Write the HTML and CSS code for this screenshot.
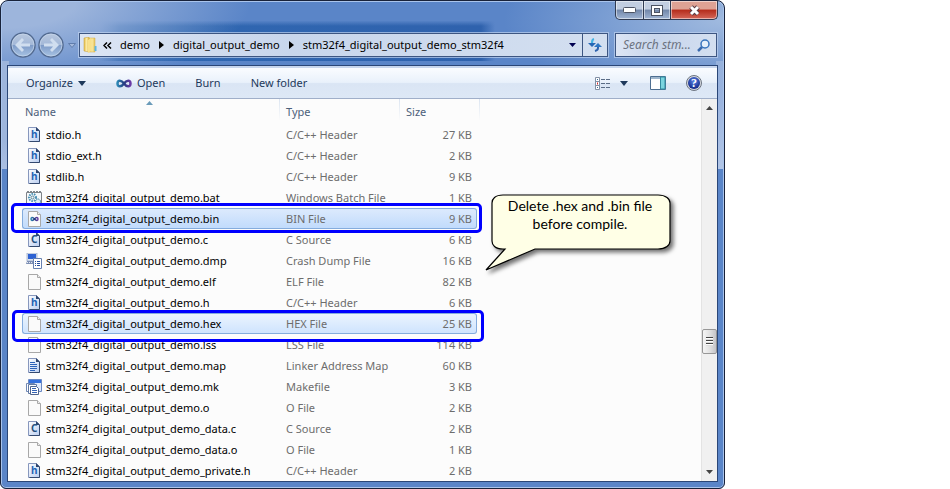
FILE: index.html
```html
<!DOCTYPE html>
<html lang="en">
<head>
<meta charset="utf-8">
<title>stm32f4_digital_output_demo_stm32f4</title>
<link rel="stylesheet" href="styles.css">
</head>
<body>
<svg class="defs" aria-hidden="true">
  <defs>
    <linearGradient id="blue" x1="0" y1="0" x2="1" y2="1"><stop offset="0" stop-color="#ffffff"/><stop offset="1" stop-color="#b9cdf0"/></linearGradient>
    <linearGradient id="glass" x1="0" y1="0" x2="0" y2="1"><stop offset="0" stop-color="#b9c8df"/><stop offset="0.48" stop-color="#a4b9d8"/><stop offset="0.52" stop-color="#7f9cc8"/><stop offset="1" stop-color="#a9c4e4"/></linearGradient>
    <linearGradient id="folder" x1="0" y1="0" x2="1" y2="0"><stop offset="0" stop-color="#e4bd4c"/><stop offset="0.5" stop-color="#fbe9a0"/><stop offset="1" stop-color="#e6c25a"/></linearGradient>
    <linearGradient id="loop" x1="0" y1="0" x2="1" y2="0"><stop offset="0" stop-color="#2c86b4"/><stop offset="0.5" stop-color="#243c80"/><stop offset="1" stop-color="#6a3aa6"/></linearGradient>
    <radialGradient id="orb" cx="0.5" cy="0.35" r="0.6"><stop offset="0" stop-color="#5c86e8"/><stop offset="1" stop-color="#152c8c"/></radialGradient>
  </defs>
  <symbol id="page" viewBox="0 0 16 16"><path d="M2.500.5h9l3 3v12h-12z" fill="#fafafa" stroke="#a8a8a8"/><path d="M11.500.5v3h3" fill="#eee" stroke="#a8a8a8"/></symbol>
  <symbol id="bluepage" viewBox="0 0 16 16"><path d="M2.500.5h8l3 3v11h-11z" fill="url(#blue)" stroke="#8797bd"/><path d="M13.500 4v10.500h-10" fill="none" stroke="#33496f"/><path d="M10 0l4 4h-4z" fill="#2f466e"/></symbol>
  <symbol id="map" viewBox="0 0 16 16"><use href="#bluepage"/><path d="M4 4.500h5M4 6.500h7M4 8.500h7M4 10.500h7M4 12.500h5" stroke="#2c62b8"/></symbol>
  <symbol id="bin" viewBox="0 0 16 16"><use href="#page"/><path d="M8.500 8C6.500 5.800 5 6.500 5 8s1.500 2.200 3.500 0 3.500-1.500 3.500 0-1.500 2.200-3.500 0z" fill="none" stroke="url(#loop)" stroke-width="1.500"/></symbol>
  <symbol id="batch" viewBox="0 0 16 16"><path d="M.5 2.500h15v11.500h-15z" fill="#f5f8fa" stroke="#7e8388"/><path d="M1 1.500h14" stroke="#80868c" stroke-dasharray="2 1"/><circle cx="6.500" cy="7.500" r="3.500" fill="none" stroke="#4a91b5" stroke-width="2" stroke-dasharray="1.500 1"/><circle cx="6.500" cy="7.500" r="1.500" fill="none" stroke="#5b8498"/><circle cx="12" cy="11.500" r="2.500" fill="#dcecf5" stroke="#4686a5" stroke-dasharray="2 .7"/></symbol>
  <symbol id="dump" viewBox="0 0 16 16"><path d="M1 0h10v8H1z" fill="#dce3ef" stroke="#8fa0c4" stroke-width=".7"/><path d="M2 1h8v5H2z" fill="#2e62d2"/><path d="M0 11l1-3h9v3z" fill="#7e90b5"/><path d="M1 9.500h8" stroke="#e4e9f2" stroke-dasharray="1 1"/><path d="M7.500 5.500h8v10h-8z" fill="#fff" stroke="#6882b1"/><path d="M9 8.500h1m1 0h3M9 10.500h1m1 0h3M9 12.500h1m1 0h3" stroke="#284f9f"/></symbol>
  <symbol id="make" viewBox="0 0 16 16"><path d="M2.500.5h13v12h-13z" fill="#dfe9fb" stroke="#6a89c4"/><path d="M3 1h12v3H3z" fill="#3470dd"/><path d="M.5 4.500h8v8h-8z" fill="#fff" stroke="#7189b5"/><path d="M2.500 5.500h8v9h-8z" fill="#fff" stroke="#6078a2"/><path d="M4.500 7.500h6l2 2v6h-8z" fill="#fff" stroke="#50658d"/><path d="M6 9.500h4M6 11.500h5M6 13.500h5" stroke="#3563b5"/></symbol>
  <symbol id="down" viewBox="0 0 8 5"><path d="M0 0h8L4 5z" fill="currentColor"/></symbol>
  <symbol id="right" viewBox="0 0 5 8"><path d="M0 0l5 4-5 4z" fill="currentColor"/></symbol>
</svg>

<main class="window">
  <div class="caption">
    <button class="cap" aria-label="Minimize"><svg width="13" height="6"><rect x=".5" y=".5" width="12" height="5" rx="1" fill="#fff" stroke="#4c5363"/></svg></button>
    <button class="cap" aria-label="Maximize"><svg width="12" height="11"><rect x="2" y="2" width="8" height="7" fill="none" stroke="#4c5363" stroke-width="4"/><rect x="2" y="2" width="8" height="7" fill="none" stroke="#fff" stroke-width="2"/></svg></button>
    <button class="cap close" aria-label="Close"><svg width="13" height="11"><path d="M3 2l7 7M10 2L3 9" stroke="#593c43" stroke-width="5"/><path d="M3 2l7 7M10 2L3 9" stroke="#fff" stroke-width="3"/></svg></button>
  </div>

  <nav class="navbar">
    <div class="travel">
      <button aria-label="Back"><svg width="26" height="26"><circle cx="13" cy="13" r="12" fill="url(#glass)" stroke="#536b91" stroke-width="1.500"/><circle cx="13" cy="13" r="11" fill="none" stroke="#c9d8ed" opacity=".7"/><path d="M5 13l7-7 2 2-3 3.500h9v3h-9l3 3.500-2 2z" fill="#d0deef"/></svg></button>
      <button aria-label="Forward"><svg width="26" height="26"><circle cx="13" cy="13" r="12" fill="url(#glass)" stroke="#536b91" stroke-width="1.500"/><circle cx="13" cy="13" r="11" fill="none" stroke="#c9d8ed" opacity=".7"/><path d="M21 13l-7-7-2 2 3 3.500H6v3h9l-3 3.500 2 2z" fill="#d0deef"/></svg></button>
      <button class="recent" aria-label="Recent pages"><svg width="8" height="5" viewBox="0 0 8 5"><path d="M.5.5h7L4 4.500z" fill="#a3b9dc" stroke="#607dac"/></svg></button>
    </div>
    <div class="address">
      <svg class="folder" width="14" height="16"><path d="M1 1l5-1v15l-5-1z" fill="url(#folder)" stroke="#c79d35" stroke-width=".5"/><path d="M6 1h6v14H6z" fill="url(#folder)" stroke="#d1ac46" stroke-width=".5"/><path d="M5 3l3-2v13l-3 2z" fill="#f8e08a"/><path d="M12.500 9v5" stroke="#5eb5e2" stroke-width="2"/></svg>
      <button class="chevrons" aria-label="Earlier folders"><svg width="9" height="7"><path d="M4 .5L1 3.500l3 3M8 .5L5 3.500l3 3" fill="none" stroke="#000" stroke-width="1.500"/></svg></button>
      <a href="#demo">demo</a>
      <svg class="step" width="5" height="8"><use href="#right"/></svg>
      <a href="#output">digital_output_demo</a>
      <svg class="step" width="5" height="8"><use href="#right"/></svg>
      <a href="#stm32f4">stm32f4_digital_output_demo_stm32f4</a>
      <button class="history" aria-label="Previous locations"><svg width="7" height="4"><path d="M0 0h7L3.500 4z" fill="currentColor"/></svg></button>
      <button class="refresh" aria-label="Refresh"><svg width="14" height="14"><path d="M6 1C4 1.500 4 3 4 6" fill="none" stroke="#42b3e3" stroke-width="2"/><path d="M0 5h8l-4 4z" fill="#2668b5"/><path d="M10 8v2c0 2-1 2.500-3 3" fill="none" stroke="#2d62ad" stroke-width="2"/><path d="M6 9h8l-4-4z" fill="#2d76c4"/></svg></button>
    </div>
    <label class="search">
      <input type="text" placeholder="Search stm..." aria-label="Search">
      <svg width="13" height="13"><path d="M1 12l5-5" stroke="#3b6bae" stroke-width="2.500"/><circle cx="8" cy="5" r="4" fill="#e6f0fa" stroke="#3975bd" stroke-width="1.500"/></svg>
    </label>
  </nav>

  <section class="client">
    <div class="toolbar">
      <button class="organize">Organize <svg width="8" height="5"><use href="#down"/></svg></button>
      <button class="open"><svg width="16" height="9"><path d="M8 4.500C5.500 1 1.500.5 1.500 4.500s4 3.500 6.500 0 6.500-4 6.500 0-4 3.500-6.500 0z" fill="none" stroke="url(#loop)" stroke-width="2.500"/></svg>Open</button>
      <button class="burn">Burn</button>
      <button>New folder</button>
      <span class="spacer"></span>
      <button class="view" aria-label="Change view"><svg width="16" height="13"><path d="M.5.5h4v12h-4zM.5 4.500h4M.5 8.500h4" fill="#fff" stroke="#8290a5"/><path d="M2 2.500h1M2 10.500h1" stroke="#3a6d98"/><path d="M2 6.500h1" stroke="#d22b2b" stroke-width="2"/><path d="M6 2.500h4m1 0h4M6 6.500h4m1 0h4M6 10.500h4m1 0h4" stroke="#5a6c86"/></svg></button>
      <button class="more" aria-label="More views"><svg width="8" height="5"><use href="#down"/></svg></button>
      <button class="pane" aria-label="Preview pane"><svg width="16" height="14"><path d="M.5.5h15v13H.5z" fill="#fff" stroke="#4d6e91"/><path d="M1 2h9" stroke="#9eb5cc" stroke-width="2"/><path d="M10.500 1h4.500v12h-4.500z" fill="#7bd4df" stroke="#318a9f"/></svg></button>
      <button aria-label="Help"><svg width="16" height="16"><circle cx="8" cy="8" r="7.500" fill="#d5d9df" stroke="#6c7481"/><circle cx="8" cy="8" r="6" fill="url(#orb)"/><text x="5" y="12" class="question">?</text></svg></button>
    </div>

    <div class="content">
      <div class="list">
        <table>
          <colgroup><col class="c-name"><col class="c-type"><col class="c-size"></colgroup>
          <thead><tr><th>Name<svg class="sort" width="7" height="4"><path d="M0 4l3.500-4L7 4z" fill="#6a9bb9"/></svg></th><th>Type</th><th>Size</th></tr></thead>
          <tbody>
            <tr><td><svg><use href="#bluepage"/><text x="5" y="11" class="glyph">h</text></svg>stdio.h</td><td>C/C++ Header</td><td>27 KB</td></tr>
            <tr><td><svg><use href="#bluepage"/><text x="5" y="11" class="glyph">h</text></svg>stdio_ext.h</td><td>C/C++ Header</td><td>2 KB</td></tr>
            <tr><td><svg><use href="#bluepage"/><text x="5" y="11" class="glyph">h</text></svg>stdlib.h</td><td>C/C++ Header</td><td>9 KB</td></tr>
            <tr><td><svg><use href="#batch"/></svg>stm32f4_digital_output_demo.bat</td><td>Windows Batch File</td><td>1 KB</td></tr>
            <tr class="selected"><td><svg><use href="#bin"/></svg>stm32f4_digital_output_demo.bin</td><td>BIN File</td><td>9 KB</td></tr>
            <tr><td><svg><use href="#bluepage"/><text x="5" y="11" class="glyph dark">C</text></svg>stm32f4_digital_output_demo.c</td><td>C Source</td><td>6 KB</td></tr>
            <tr><td><svg><use href="#dump"/></svg>stm32f4_digital_output_demo.dmp</td><td>Crash Dump File</td><td>16 KB</td></tr>
            <tr><td><svg><use href="#page"/></svg>stm32f4_digital_output_demo.elf</td><td>ELF File</td><td>82 KB</td></tr>
            <tr><td><svg><use href="#bluepage"/><text x="5" y="11" class="glyph">h</text></svg>stm32f4_digital_output_demo.h</td><td>C/C++ Header</td><td>6 KB</td></tr>
            <tr class="selected soft"><td><svg><use href="#page"/></svg>stm32f4_digital_output_demo.hex</td><td>HEX File</td><td>25 KB</td></tr>
            <tr><td><svg><use href="#page"/></svg>stm32f4_digital_output_demo.lss</td><td>LSS File</td><td>114 KB</td></tr>
            <tr><td><svg><use href="#map"/></svg>stm32f4_digital_output_demo.map</td><td>Linker Address Map</td><td>60 KB</td></tr>
            <tr><td><svg><use href="#make"/></svg>stm32f4_digital_output_demo.mk</td><td>Makefile</td><td>3 KB</td></tr>
            <tr><td><svg><use href="#page"/></svg>stm32f4_digital_output_demo.o</td><td>O File</td><td>2 KB</td></tr>
            <tr><td><svg><use href="#bluepage"/><text x="5" y="11" class="glyph dark">C</text></svg>stm32f4_digital_output_demo_data.c</td><td>C Source</td><td>2 KB</td></tr>
            <tr><td><svg><use href="#page"/></svg>stm32f4_digital_output_demo_data.o</td><td>O File</td><td>1 KB</td></tr>
            <tr><td><svg><use href="#bluepage"/><text x="5" y="11" class="glyph">h</text></svg>stm32f4_digital_output_demo_private.h</td><td>C/C++ Header</td><td>2 KB</td></tr>
          </tbody>
        </table>
        <div class="mark mark-bin"></div>
        <div class="mark mark-hex"></div>
        <div class="callout">
          <svg width="188" height="84"><path d="M18 1h155c8 0 12 4 12 8v38c0 4-4 8-12 8H50L1 76l19-21h-2C10 55 7 51 7 47V9c0-4 3-8 11-8z" fill="#ffffe6" stroke="#000" stroke-width="1.200"/></svg>
          <p>Delete .hex and .bin file before compile.</p>
        </div>
      </div>
      <div class="scrollbar">
        <button aria-label="Scroll up"><svg width="7" height="4"><path d="M0 4l3.500-4L7 4z" fill="#444"/></svg></button>
        <div class="track"><div class="thumb"><i></i></div></div>
        <button aria-label="Scroll down"><svg width="7" height="4"><path d="M0 0h7L3.500 4z" fill="#444"/></svg></button>
      </div>
    </div>
  </section>
</main>
</body>
</html>
```

FILE: styles.css
```css
* { box-sizing: border-box; }

body {
  margin: 0;
  background: #fff;
  font: 11px/20px "Noto Sans", "Open Sans", sans-serif;
  color: #000;
}

button {
  display: flex;
  align-items: center;
  justify-content: center;
  padding: 0;
  border: 0;
  background: none;
  color: inherit;
  font: inherit;
}

svg { display: block; flex: none; }
.defs { position: absolute; width: 0; height: 0; }

.window {
  display: flex;
  flex-direction: column;
  min-height: 100vh;
  margin-right: 225px;
  padding: 0 6px 6px;
  border: 1px solid #18223a;
  border-radius: 8px 8px 6px 6px;
  box-shadow: inset 0 0 0 1px #a9c4ec;
  background:
    radial-gradient(ellipse 250px 90px at 0 0, #9db5dc 30%, rgba(157, 181, 220, 0)),
    radial-gradient(ellipse 220px 80px at 100% 20px, #a0badf, rgba(160, 186, 223, 0)),
    linear-gradient(rgba(90, 133, 200, .9), rgba(90, 133, 200, 0) 5px) 0 20px / 100% 6px no-repeat,
    linear-gradient(90deg, transparent 98px, #3068b2 118px, #2f62ad 480px, transparent 494px) 0 20px / 100% 40px no-repeat,
    linear-gradient(#9db5dc 80px, #c4d2ee 165px, transparent 167px) 0 60px / 8px 108px no-repeat,
    linear-gradient(#8eaada, #c5d5ee 165px, transparent 167px) 100% 60px / 8px 108px no-repeat,
    #5a85c8;
}

.caption { display: flex; justify-content: flex-end; height: 31px; }

.cap {
  width: 27px;
  height: 19px;
  border: 1px solid #303b52;
  border-top: 0;
  border-left: 0;
  box-shadow: inset 0 0 0 1px rgba(255, 255, 255, .5);
  background: linear-gradient(#c2cee1 45%, #7186a9 50%, #a0b5d4);
}
.cap:first-child { width: 29px; border-left: 1px solid #303b52; border-radius: 0 0 0 5px; }
.cap.close {
  width: 47px;
  border-radius: 0 0 5px 0;
  background: linear-gradient(#dea294 45%, #b52c1b 50%, #d5685a);
}

.navbar { display: flex; align-items: center; height: 33px; padding: 0 1px 7px 3px; }
.travel { display: flex; align-items: center; gap: 2px; width: 69px; }
.travel .recent { margin-left: 2px; }

.address, .search {
  display: flex;
  align-items: center;
  height: 24px;
  border: 1px solid #3d5682;
  outline: 1px solid rgba(190, 210, 240, .7);
  background: linear-gradient(90deg, #dce5f4, #c8d6ec 40%, #d3dff0);
}
.address { flex: 1; padding-left: 3px; }
.address a { color: #000; text-decoration: none; white-space: nowrap; }
.chevrons { margin: 0 8px 0 6px; }
.step { margin: 0 9px; }
.history { margin-left: auto; width: 20px; color: #000050; }
.refresh { width: 25px; height: 22px; border-left: 1px solid #3d5682; }

.search { width: 102px; margin-left: 7px; padding: 0 6px 0 7px; }
.search input {
  flex: 1;
  min-width: 0;
  padding: 0;
  border: 0;
  outline: 0;
  background: none;
  font: italic 12px/20px "Noto Sans", sans-serif;
}
.search input::placeholder { color: #6b7280; opacity: 1; }

.client {
  display: flex;
  flex: 1;
  flex-direction: column;
  border: 1px solid #2a4677;
  background: #fcfcfc;
}

.toolbar {
  display: flex;
  align-items: center;
  height: 33px;
  padding: 0 15px 0 18px;
  border-top: 2px solid #c7d6ed;
  border-bottom: 1px solid #a0afc9;
  background: linear-gradient(#fafcff, #e9f1fb 48%, #dae5f4 52%, #dde8f6);
  color: #1e395b;
}
.toolbar button { gap: 5px; white-space: nowrap; }
.organize, .open, .burn { margin-right: 30px; }
.spacer { flex: 1; }
.view { margin-right: 9px; }
.more { margin-right: 22px; }
.pane { margin-right: 20px; }
.question { font: bold 12px "Liberation Serif", serif; fill: #fff; }

.content { display: flex; flex: 1; }
.list { position: relative; flex: 1; min-width: 0; padding-left: 14px; }

table { width: 455px; table-layout: fixed; border-spacing: 0; }
.c-name { width: 258px; }
.c-type { width: 120px; }
.c-size { width: 77px; }

th {
  position: relative;
  height: 25px;
  padding: 0 0 0 6px;
  color: #4c607a;
  font-weight: 400;
  text-align: left;
}
th::after {
  content: "";
  position: absolute;
  top: 0;
  right: 0;
  width: 1px;
  height: 22px;
  background: linear-gradient(#dce5f1, #fcfcfc);
}
th:last-child::after { right: -3px; }
th:first-child { padding-left: 3px; }
.sort { position: absolute; top: 2px; left: 124px; }

td { height: 21px; padding: 0 6px; color: #6d6d6d; white-space: nowrap; line-height: 19px; border: 0 solid #84acdd; }
td:first-child { display: flex; align-items: center; gap: 4px; padding: 0 4px; color: #000; }
td:last-child { padding-right: 5px; text-align: right; }
td svg { width: 16px; height: 16px; }
.selected td { border-width: 1px 0; background: linear-gradient(#dceafd, #c1dbfc); }
.selected.soft td { background: linear-gradient(#ebf4fe, #cfe4fe); }
.selected td:first-child { padding-left: 3px; border-left-width: 1px; border-radius: 3px 0 0 3px; }
.selected td:last-child { padding-right: 4px; border-right-width: 1px; border-radius: 0 3px 3px 0; }

.glyph { font: bold 10px "Noto Sans", sans-serif; fill: #2463b4; }
.glyph.dark { fill: #23507f; }

.mark { position: absolute; border: 3px solid #00f; border-radius: 5px; }
.mark-bin { top: 104px; left: 3px; width: 471px; height: 30px; }
.mark-hex { top: 211px; left: 4px; width: 472px; height: 32px; }

.callout { position: absolute; top: 95px; left: 477px; width: 188px; }
.callout svg { filter: drop-shadow(3px 3px 2px rgba(0, 0, 0, .55)); }
.callout p {
  position: absolute;
  top: 3px;
  left: 8px;
  width: 174px;
  margin: 0;
  padding: 0 12px;
  font: 14px/18px Lato, sans-serif;
  text-align: center;
}

.scrollbar { display: flex; flex-direction: column; width: 16px; border-left: 1px solid #e3e3e3; background: #f0f0f0; }
.scrollbar button { height: 18px; }
.track { display: flex; flex: 1; flex-direction: column; padding-top: 212px; }
.thumb {
  display: flex;
  align-items: center;
  justify-content: center;
  height: 25px;
  border: 1px solid #979797;
  border-radius: 2px;
  background: linear-gradient(90deg, #f5f5f5, #e2e2e2 50%, #c4c4c8);
}
.thumb i { width: 7px; height: 9px; background: repeating-linear-gradient(#444 0 1px, #fff 1px 2px, #ddd 2px 3px); }
```
